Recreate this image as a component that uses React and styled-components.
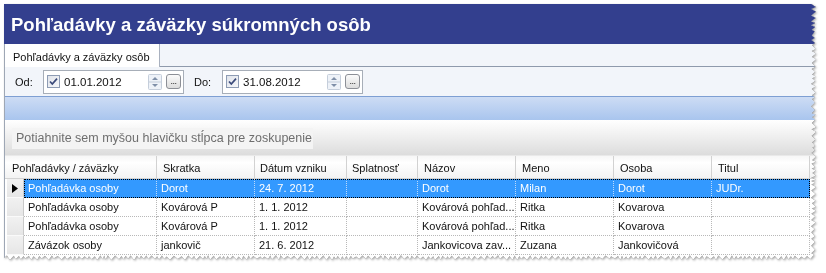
import React from "react";
import styled, { createGlobalStyle } from "styled-components";

const GlobalStyle = createGlobalStyle`
  html, body { margin: 0; padding: 0; background: #fff; }
  body { font-family: "Liberation Sans", Arial, sans-serif; }
`;

const PAPER_W = 813;
const PAPER_H = 257;

function tornClip(w, h) {
  let seed = 7;
  const rnd = () => {
    seed = (seed * 9301 + 49297) % 233280;
    return seed / 233280;
  };
  const pts = ["0px 0px", `${w - 4}px 0px`];
  let y = 0;
  let flip = false;
  while (y < h - 5) {
    const x = flip ? w - 1 - rnd() * 1.5 : w - 5 - rnd() * 1.5;
    pts.push(`${x.toFixed(1)}px ${y.toFixed(1)}px`);
    y += 1.5 + rnd() * 2.5;
    flip = !flip;
  }
  let x = w - 4;
  flip = false;
  while (x > 0) {
    const yy = flip ? h - 1 - rnd() * 1.5 : h - 4.5 - rnd() * 1.2;
    pts.push(`${x.toFixed(1)}px ${yy.toFixed(1)}px`);
    x -= 1.5 + rnd() * 2.5;
    flip = !flip;
  }
  pts.push(`0px ${h - 3}px`);
  return `polygon(${pts.join(", ")})`;
}

const Stage = styled.div`
  width: 826px;
  height: 273px;
  box-sizing: border-box;
  padding: 4px 0 0 4px;
`;

const Shadow = styled.div`
  width: ${PAPER_W}px;
  filter: drop-shadow(0 0 0.6px rgba(0, 0, 0, 0.55))
    drop-shadow(1px 1px 1px rgba(0, 0, 0, 0.35));
`;

const Paper = styled.div`
  width: ${PAPER_W}px;
  height: ${PAPER_H}px;
  background: #fff;
  display: flex;
  flex-direction: column;
  overflow: hidden;
`;

const TitleBar = styled.div`
  height: 40px;
  flex: none;
  background: #333f8e;
  color: #fff;
  font-weight: bold;
  font-size: 18.5px;
  display: flex;
  align-items: center;
  padding-left: 7px;
  padding-top: 1px;
  box-sizing: border-box;
`;

const Body = styled.div`
  flex: 1;
  display: flex;
  flex-direction: column;
  border-left: 1px solid #9ea7b5;
`;

const TabStrip = styled.div`
  height: 23px;
  flex: none;
  box-sizing: border-box;
  background: #f2f5fa;
  border-bottom: 1px solid #8f9aac;
  display: flex;
  align-items: stretch;
`;

const Tab = styled.div`
  background: #fff;
  border-right: 1px solid #a9b1bf;
  margin-bottom: -1px;
  padding: 2px 0 0 8px;
  width: 155px;
  box-sizing: border-box;
  font-size: 11px;
  color: #111;
  display: flex;
  align-items: center;
`;

const Toolbar = styled.div`
  height: 29px;
  flex: none;
  background: #f2f5fa;
  display: flex;
  align-items: center;
  padding-left: 10px;
  font-size: 11px;
  color: #111;
`;

const Label = styled.span`
  width: ${(p) => p.$w}px;
  padding-top: 1px;
`;

const DateBox = styled.div`
  width: ${(p) => p.$w}px;
  height: 24px;
  box-sizing: border-box;
  border: 1px solid #a7aeb8;
  background: #fff;
  display: flex;
  align-items: center;
  padding: 0 2px 0 3px;
  margin-right: ${(p) => p.$mr}px;
`;

const DateText = styled.span`
  margin-left: 4px;
  flex: 1;
  font-size: 11.5px;
  padding-top: 1px;
`;

const Spin = styled.div`
  width: 14px;
  height: 16px;
  margin-right: 4px;
  display: flex;
`;

const DotsButton = styled.div`
  width: 15px;
  height: 15px;
  box-sizing: border-box;
  border: 1px solid #8c8f96;
  border-radius: 3px;
  background: linear-gradient(#fbfbfb, #dcdcdc);
  font-size: 9px;
  line-height: 13px;
  text-align: center;
  color: #222;
  letter-spacing: -0.5px;
`;

const BlueBar = styled.div`
  height: 24px;
  flex: none;
  box-sizing: border-box;
  border-top: 1px solid #7e9fd3;
  background: linear-gradient(#cddcf4, #a9c5ee);
  margin-right: 1px;
`;

const GroupPanel = styled.div`
  height: 35px;
  flex: none;
  box-sizing: border-box;
  background: linear-gradient(#ffffff, #e7e7e7 70%, #dcdcdc);
  padding: 8px 0 0 7px;
`;

const GroupHint = styled.div`
  width: 301px;
  height: 21px;
  box-sizing: border-box;
  background: #f4f4f4;
  color: #6e6e6e;
  font-size: 12.5px;
  padding: 3px 0 0 4px;
  white-space: nowrap;
`;

const HeaderRow = styled.div`
  display: grid;
  grid-template-columns: 152px 98px 92px 71px 98px 98px 98px 98px;
  height: 24px;
  flex: none;
  box-sizing: border-box;
  background: linear-gradient(#f6f6f6, #ffffff 30%, #f3f3f3);
  border-bottom: 1px solid #d3d3d3;
  border-top: 1px solid #e9e9e9;
`;

const HeaderCell = styled.div`
  border-right: 1px solid #d2d2d2;
  font-size: 11px;
  color: #111;
  display: flex;
  align-items: center;
  padding-left: ${(p) => p.$pad}px;
  padding-top: 2px;
  white-space: nowrap;
  overflow: hidden;
`;

const Row = styled.div`
  display: flex;
  height: 19px;
  flex: none;
`;

const Indicator = styled.div`
  width: 17px;
  margin-left: 2px;
  box-sizing: border-box;
  background: linear-gradient(#f1f1f1, #e6e6e6);
  border-bottom: 1px solid #fafafa;
  border-right: 1px solid #c9c9c9;
  display: flex;
  align-items: center;
  justify-content: center;
`;

const RowCells = styled.div`
  display: grid;
  grid-template-columns: 133px 98px 92px 71px 98px 98px 98px 98px;
  background: ${(p) => (p.$selected ? "#3399ff" : "#fff")};
  color: ${(p) => (p.$selected ? "#fff" : "#111")};
  outline: ${(p) => (p.$selected ? "1px dotted #000" : "none")};
  outline-offset: -1px;
`;

const Cell = styled.div`
  box-sizing: border-box;
  border-right: 1px dotted ${(p) => (p.$selected ? "#bcd9fb" : "#b8b8b8")};
  border-bottom: 1px dotted ${(p) => (p.$selected ? "#3399ff" : "#b8b8b8")};
  font-size: 11px;
  padding: 3px 0 0 4px;
  white-space: pre;
  overflow: hidden;
`;

const Checkbox = () => (
  <svg width="13" height="13" viewBox="0 0 13 13">
    <defs>
      <linearGradient id="cbg" x1="0" y1="0" x2="1" y2="1">
        <stop offset="0" stopColor="#dfe3ea" />
        <stop offset="1" stopColor="#f7f8fa" />
      </linearGradient>
    </defs>
    <rect x="0.5" y="0.5" width="12" height="12" fill="url(#cbg)" stroke="#8e9cb4" />
    <path d="M3 6.5 L5.3 9 L10 3.6" fill="none" stroke="#3b4a7a" strokeWidth="1.7" />
  </svg>
);

const Spinner = () => (
  <svg width="14" height="16" viewBox="0 0 14 16">
    <rect x="0.5" y="0.5" width="13" height="15" rx="1" fill="#eef2f8" stroke="#c5cedb" />
    <line x1="1" y1="8" x2="13" y2="8" stroke="#c5cedb" />
    <path d="M4 6 L7 3 L10 6 Z" fill="#7f8fa8" />
    <path d="M4 10 L7 13 L10 10 Z" fill="#7f8fa8" />
  </svg>
);

const Triangle = () => (
  <svg width="6" height="9" viewBox="0 0 6 9">
    <path d="M0 0 L6 4.5 L0 9 Z" fill="#000" />
  </svg>
);

const DateEdit = ({ value, width, mr }) => (
  <DateBox $w={width} $mr={mr}>
    <Checkbox />
    <DateText>{value}</DateText>
    <Spin>
      <Spinner />
    </Spin>
    <DotsButton>...</DotsButton>
  </DateBox>
);

const headers = [
  ["Pohľadávky / záväzky", 7],
  ["Skratka", 6],
  ["Dátum vzniku", 5],
  ["Splatnosť", 5],
  ["Názov", 6],
  ["Meno", 6],
  ["Osoba", 6],
  ["Titul", 6],
];

const rows = [
  ["Pohľadávka osoby", "Dorot", "24. 7. 2012", "", "Dorot", "Milan", "Dorot", "JUDr."],
  ["Pohľadávka osoby", "Kovárová P", "1. 1. 2012", "", "Kovárová pohľad...", "Ritka", "Kovarova", ""],
  ["Pohľadávka osoby", "Kovárová P", "1. 1. 2012", "", "Kovárová pohľad...", "Ritka", "Kovarova", ""],
  ["Závázok osoby", "jankovič", "21. 6. 2012", "", "Jankovicova zav...", "Zuzana", "Jankovičová", ""],
];

export default function App() {
  const clip = tornClip(PAPER_W, PAPER_H);
  return (
    <>
      <GlobalStyle />
      <Stage>
        <Shadow>
          <Paper style={{ clipPath: clip }}>
            <TitleBar>Pohľadávky a záväzky súkromných osôb</TitleBar>
            <Body>
              <TabStrip>
                <Tab>Pohľadávky a záväzky osôb</Tab>
              </TabStrip>
              <Toolbar>
                <Label $w={28}>Od:</Label>
                <DateEdit value="01.01.2012" width={141} mr={10} />
                <Label $w={28}>Do:</Label>
                <DateEdit value="31.08.2012" width={141} mr={0} />
              </Toolbar>
              <BlueBar />
              <GroupPanel>
                <GroupHint>Potiahnite sem myšou hlavičku stĺpca pre zoskupenie</GroupHint>
              </GroupPanel>
              <HeaderRow>
                {headers.map(([h, pad]) => (
                  <HeaderCell key={h} $pad={pad}>
                    {h}
                  </HeaderCell>
                ))}
              </HeaderRow>
              {rows.map((r, i) => (
                <Row key={i}>
                  <Indicator>{i === 0 && <Triangle />}</Indicator>
                  <RowCells $selected={i === 0}>
                    {r.map((c, j) => (
                      <Cell key={j} $selected={i === 0}>
                        {c}
                      </Cell>
                    ))}
                  </RowCells>
                </Row>
              ))}
            </Body>
          </Paper>
        </Shadow>
      </Stage>
    </>
  );
}
